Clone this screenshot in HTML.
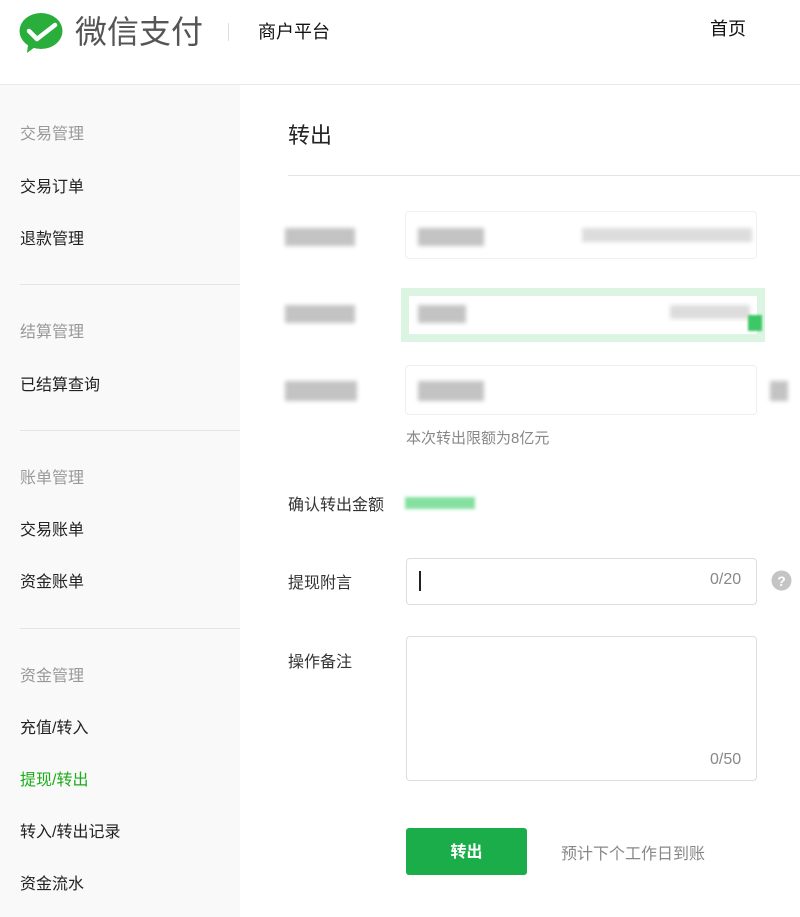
<!DOCTYPE html>
<html><head><meta charset="utf-8"><style>
*{margin:0;padding:0;box-sizing:border-box}
body{width:800px;height:917px;overflow:hidden;background:#fff;font-family:"Liberation Sans","Noto Sans CJK SC",sans-serif;position:relative;color:#222}
.a{position:absolute;white-space:nowrap}
.side{position:absolute;left:0;top:85px;width:240px;height:832px;background:#f9f9f9}
.h{color:#999;font-size:16px}
.i{color:#222;font-size:16px}
.dv{position:absolute;left:20px;width:220px;height:1px;background:#e4e4e4}
.lbl{font-size:16px;color:#333}
.box{position:absolute;border:1px solid #ddd;border-radius:4px;background:#fff}
.bl{position:absolute;background:#aaa;filter:blur(2px);opacity:.7}
</style></head><body>
<svg class="a" style="left:19px;top:12px" width="46" height="44" viewBox="0 0 46 44">
<ellipse cx="22" cy="19" rx="21.5" ry="18" fill="#2aae3b"/>
<path d="M9 33 L8 41 L16 35 Z" fill="#2aae3b"/>
<path d="M10 19 L18 27 L36 13" stroke="#fff" stroke-width="4.5" fill="none" stroke-linecap="round" stroke-linejoin="round"/>
</svg>
<div class="a" style="left:75px;top:10px;font-size:32px;color:#555;line-height:44px">微信支付</div>
<div class="a" style="left:228px;top:23px;width:1px;height:18px;background:#ddd"></div>
<div class="a" style="left:258px;top:19px;font-size:18px;line-height:26px;color:#111">商户平台</div>
<div class="a" style="left:710px;top:16px;font-size:18px;line-height:26px;color:#111">首页</div>
<div class="a" style="left:0;top:84px;width:800px;height:1px;background:#e8e8e8"></div>
<div class="side">
<div class="a h" style="left:20px;top:35px">交易管理</div>
<div class="a i" style="left:20px;top:88px">交易订单</div>
<div class="a i" style="left:20px;top:140px">退款管理</div>
<div class="dv" style="top:199px"></div>
<div class="a h" style="left:20px;top:233px">结算管理</div>
<div class="a i" style="left:20px;top:286px">已结算查询</div>
<div class="dv" style="top:345px"></div>
<div class="a h" style="left:20px;top:379px">账单管理</div>
<div class="a i" style="left:20px;top:431px">交易账单</div>
<div class="a i" style="left:20px;top:483px">资金账单</div>
<div class="dv" style="top:543px"></div>
<div class="a h" style="left:20px;top:577px">资金管理</div>
<div class="a i" style="left:20px;top:629px">充值/转入</div>
<div class="a i" style="left:20px;top:681px;color:#1aad19">提现/转出</div>
<div class="a i" style="left:20px;top:733px">转入/转出记录</div>
<div class="a i" style="left:20px;top:785px">资金流水</div>
</div>
<div class="a" style="left:288px;top:121px;font-size:22px;line-height:30px;color:#222">转出</div>
<div class="a" style="left:288px;top:175px;width:512px;height:1px;background:#e4e4e4"></div>

<div class="bl" style="left:285px;top:228px;width:70px;height:18px"></div>
<div class="box" style="left:405px;top:211px;width:352px;height:48px;border-color:#f0f0f0"></div>
<div class="bl" style="left:418px;top:228px;width:66px;height:18px"></div>
<div class="bl" style="left:582px;top:228px;width:170px;height:14px;opacity:.4"></div>

<div class="bl" style="left:285px;top:305px;width:70px;height:18px"></div>
<div class="box" style="left:401px;top:288px;width:364px;height:54px;border:8px solid #dcf5e3;border-radius:0"></div>
<div class="bl" style="left:418px;top:305px;width:48px;height:18px"></div>
<div class="bl" style="left:670px;top:305px;width:80px;height:14px;opacity:.4"></div>
<div class="a" style="left:748px;top:315px;width:14px;height:16px;background:#3cc866;filter:blur(1px)"></div>

<div class="bl" style="left:285px;top:381px;width:72px;height:20px"></div>
<div class="box" style="left:405px;top:365px;width:352px;height:50px;border-color:#eee"></div>
<div class="bl" style="left:418px;top:381px;width:66px;height:20px"></div>
<div class="bl" style="left:770px;top:381px;width:18px;height:20px"></div>
<div class="a" style="left:406px;top:427px;font-size:15px;color:#888">本次转出限额为8亿元</div>

<div class="a lbl" style="left:288px;top:491px">确认转出金额</div>
<div class="a" style="left:405px;top:497px;width:70px;height:12px;background:#66d98a;filter:blur(1.5px);opacity:.8"></div>

<div class="a lbl" style="left:288px;top:569px">提现附言</div>
<div class="box" style="left:406px;top:558px;width:351px;height:47px"></div>
<div class="a" style="left:419px;top:571px;width:2px;height:20px;background:#222"></div>
<div class="a" style="left:710px;top:571px;font-size:16px;color:#888">0/20</div>
<svg class="a" style="left:771px;top:570px" width="21" height="21" viewBox="0 0 21 21"><circle cx="10.5" cy="10.5" r="10" fill="#c4c4c4"/><text x="10.5" y="16" font-size="14" font-weight="bold" fill="#fff" text-anchor="middle" font-family="Liberation Sans">?</text></svg>

<div class="a lbl" style="left:288px;top:648px">操作备注</div>
<div class="box" style="left:406px;top:636px;width:351px;height:145px"></div>
<div class="a" style="left:710px;top:751px;font-size:16px;color:#888">0/50</div>

<div class="a" style="left:406px;top:828px;width:121px;height:47px;background:#1aad4a;border-radius:3px;color:#fff;font-size:16px;font-weight:bold;text-align:center;line-height:49px">转出</div>
<div class="a" style="left:561px;top:840px;font-size:16px;color:#888">预计下个工作日到账</div>
</body></html>
